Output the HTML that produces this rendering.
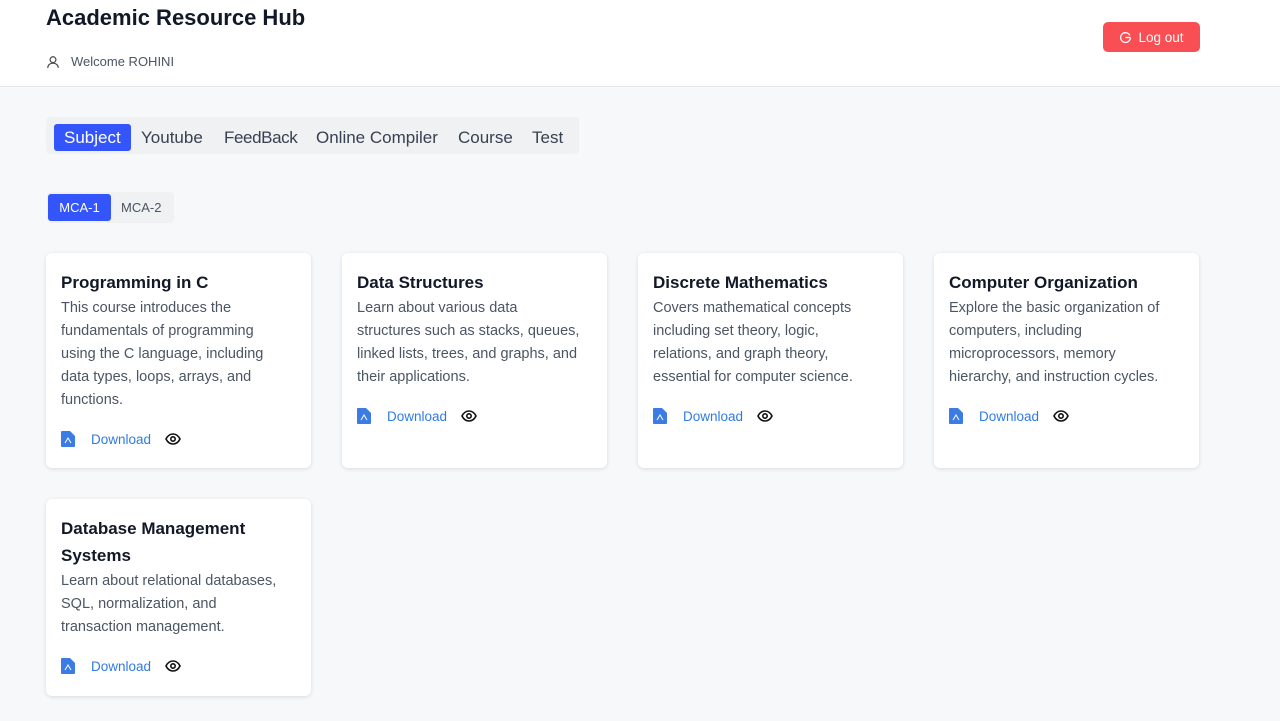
<!DOCTYPE html>
<html><head><meta charset="utf-8"><style>
*{box-sizing:border-box;margin:0;padding:0}
body{width:1280px;height:721px;overflow:hidden;background:#f7f8fa;font-family:"Liberation Sans",sans-serif;color:#111827}
.hdr{position:absolute;left:0;top:0;width:1280px;height:87px;background:#fff;border-bottom:1px solid #e5e7eb}
.hdr h1{position:absolute;left:46px;top:5px;font-size:22px;font-weight:700;color:#111827}
.welcome{position:absolute;left:46px;top:54px;font-size:13px;color:#4b5563;display:flex;align-items:center}
.welcome svg{margin-right:11px}
.logout{position:absolute;left:1103px;top:22px;width:97px;height:30px;background:#f94e54;border-radius:5px;color:#fff;font-size:13.5px;display:flex;align-items:center;justify-content:center}
.logout svg{margin-right:6px}
.tabs{position:absolute;left:46px;top:117px;width:533px;height:37px;background:#f0f1f3;border-radius:4px}
.tab{position:absolute;top:7px;height:27px;font-size:17px;line-height:28px;color:#374151;white-space:nowrap}
.tab.on{background:#3355fb;color:#fff;border-radius:3px;padding:0 10px}
.sub{position:absolute;left:47px;top:192px;width:127px;height:31px;background:#f0f1f3;border-radius:4px}
.sub span{position:absolute;top:2px;height:27px;line-height:27px;font-size:13px;color:#4b5563}
.sub .on{left:1px;width:63px;background:#3355fb;color:#fff;border-radius:3px;text-align:center}
.card{position:absolute;width:265px;background:#fff;border-radius:6px;box-shadow:0 1px 4px rgba(0,0,0,.12);padding:16px 15px 0}
.card h3{font-size:17px;font-weight:700;line-height:27px;color:#111827;white-space:nowrap}
.card p{font-size:14.5px;line-height:23px;color:#4b5563;white-space:nowrap;margin-top:1px}
.act{display:flex;align-items:center;margin-top:19px;font-size:13.5px;color:#2f7ae5}
.act .pdf{margin-right:16px}
.act .eye{margin-left:14px}
</style></head><body>
<div class="hdr">
<h1>Academic Resource Hub</h1>
<div class="welcome"><svg width="14" height="14" viewBox="0 0 24 24" fill="none" stroke="#444" stroke-width="2"><circle cx="12" cy="8" r="5"/><path d="M3 22c0-5 4-8 9-8s9 3 9 8"/></svg>Welcome ROHINI</div>
<div class="logout"><svg width="13" height="13" viewBox="0 0 24 24" fill="none" stroke="#fff" stroke-width="2.4"><path d="M20 8A9 9 0 1 0 21 12"/><path d="M12 12h9"/></svg>Log out</div>
</div>
<div class="tabs">
<div class="tab on" style="left:8px">Subject</div>
<div class="tab" style="left:95px">Youtube</div>
<div class="tab" style="left:178px;letter-spacing:-0.4px">FeedBack</div>
<div class="tab" style="left:270px">Online Compiler</div>
<div class="tab" style="left:412px">Course</div>
<div class="tab" style="left:486px">Test</div>
</div>
<div class="sub"><span class="on">MCA-1</span><span style="left:74px">MCA-2</span></div>

<div class="card" style="left:46px;top:253px;height:215px"><h3>Programming in C</h3><p>This course introduces the<br>fundamentals of programming<br>using the C language, including<br>data types, loops, arrays, and<br>functions.</p>
<div class="act"><svg class="pdf" width="14" height="16" viewBox="0 0 14 16"><path d="M0 1a1 1 0 0 1 1-1h8l5 5v10a1 1 0 0 1-1 1H1a1 1 0 0 1-1-1z" fill="#3b7be6"/><path d="M4 12l3-5 3 5" stroke="#fff" stroke-width="1" fill="none"/></svg>Download<svg class="eye" width="16" height="12" viewBox="0 0 16 12" fill="none" stroke="#111" stroke-width="1.6"><path d="M1 6C3 2 5.5 1 8 1s5 1 7 5c-2 4-4.5 5-7 5S3 10 1 6z"/><circle cx="8" cy="6" r="2.2"/></svg></div></div>

<div class="card" style="left:342px;top:253px;height:215px"><h3>Data Structures</h3><p>Learn about various data<br>structures such as stacks, queues,<br>linked lists, trees, and graphs, and<br>their applications.</p>
<div class="act"><svg class="pdf" width="14" height="16" viewBox="0 0 14 16"><path d="M0 1a1 1 0 0 1 1-1h8l5 5v10a1 1 0 0 1-1 1H1a1 1 0 0 1-1-1z" fill="#3b7be6"/><path d="M4 12l3-5 3 5" stroke="#fff" stroke-width="1" fill="none"/></svg>Download<svg class="eye" width="16" height="12" viewBox="0 0 16 12" fill="none" stroke="#111" stroke-width="1.6"><path d="M1 6C3 2 5.5 1 8 1s5 1 7 5c-2 4-4.5 5-7 5S3 10 1 6z"/><circle cx="8" cy="6" r="2.2"/></svg></div></div>

<div class="card" style="left:638px;top:253px;height:215px"><h3>Discrete Mathematics</h3><p>Covers mathematical concepts<br>including set theory, logic,<br>relations, and graph theory,<br>essential for computer science.</p>
<div class="act"><svg class="pdf" width="14" height="16" viewBox="0 0 14 16"><path d="M0 1a1 1 0 0 1 1-1h8l5 5v10a1 1 0 0 1-1 1H1a1 1 0 0 1-1-1z" fill="#3b7be6"/><path d="M4 12l3-5 3 5" stroke="#fff" stroke-width="1" fill="none"/></svg>Download<svg class="eye" width="16" height="12" viewBox="0 0 16 12" fill="none" stroke="#111" stroke-width="1.6"><path d="M1 6C3 2 5.5 1 8 1s5 1 7 5c-2 4-4.5 5-7 5S3 10 1 6z"/><circle cx="8" cy="6" r="2.2"/></svg></div></div>

<div class="card" style="left:934px;top:253px;height:215px"><h3>Computer Organization</h3><p>Explore the basic organization of<br>computers, including<br>microprocessors, memory<br>hierarchy, and instruction cycles.</p>
<div class="act"><svg class="pdf" width="14" height="16" viewBox="0 0 14 16"><path d="M0 1a1 1 0 0 1 1-1h8l5 5v10a1 1 0 0 1-1 1H1a1 1 0 0 1-1-1z" fill="#3b7be6"/><path d="M4 12l3-5 3 5" stroke="#fff" stroke-width="1" fill="none"/></svg>Download<svg class="eye" width="16" height="12" viewBox="0 0 16 12" fill="none" stroke="#111" stroke-width="1.6"><path d="M1 6C3 2 5.5 1 8 1s5 1 7 5c-2 4-4.5 5-7 5S3 10 1 6z"/><circle cx="8" cy="6" r="2.2"/></svg></div></div>

<div class="card" style="left:46px;top:499px;height:197px"><h3>Database Management<br>Systems</h3><p>Learn about relational databases,<br>SQL, normalization, and<br>transaction management.</p>
<div class="act"><svg class="pdf" width="14" height="16" viewBox="0 0 14 16"><path d="M0 1a1 1 0 0 1 1-1h8l5 5v10a1 1 0 0 1-1 1H1a1 1 0 0 1-1-1z" fill="#3b7be6"/><path d="M4 12l3-5 3 5" stroke="#fff" stroke-width="1" fill="none"/></svg>Download<svg class="eye" width="16" height="12" viewBox="0 0 16 12" fill="none" stroke="#111" stroke-width="1.6"><path d="M1 6C3 2 5.5 1 8 1s5 1 7 5c-2 4-4.5 5-7 5S3 10 1 6z"/><circle cx="8" cy="6" r="2.2"/></svg></div></div>
</body></html>
